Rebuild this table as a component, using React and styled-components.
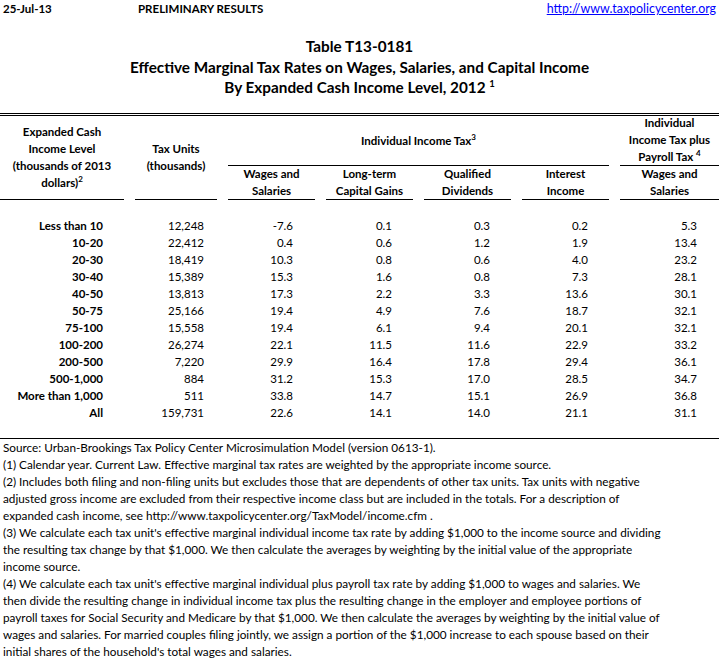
import React from 'react';
import styled, { createGlobalStyle } from 'styled-components';

const Global = createGlobalStyle`
  html, body { margin: 0; padding: 0; background: #fff; }
  body { font-family: Lato, "Liberation Sans", sans-serif; color: #000; }
`;

const COLS = '124px 82px 87px 87px 87px 87px 1fr';

const Page = styled.div`
  width: 719px;
  font-size: 11.5px;
`;

const TopBar = styled.div`
  display: grid;
  grid-template-columns: 135px 1fr auto;
  align-items: center;
  height: 17px;
  line-height: 17px;
  padding: 0 3px;
`;

const TopBold = styled.span`
  font-weight: 700;
`;

const Link = styled.a`
  color: #0000ff;
  font-size: 12.4px;
  text-decoration: underline;
`;

const Titles = styled.div`
  margin-top: 19px;
  text-align: center;
  font-weight: 700;
  font-size: 15.3px;
  line-height: 20.5px;
`;

const Sup = styled.sup`
  font-size: ${(p) => p.$size || 8}px;
  line-height: 0;
  vertical-align: super;
`;

const HeadGrid = styled.div`
  margin-top: 15px;
  border-top: 3px double #000;
  display: grid;
  grid-template-columns: ${COLS};
  grid-template-rows: 50px 34px;
  column-gap: 11px;
  font-weight: 700;
  line-height: 17px;
  text-align: center;
`;

const HeadCell = styled.div`
  grid-column: ${(p) => p.$col};
  grid-row: ${(p) => p.$row};
  border-bottom: 1px solid #000;
  display: flex;
  flex-direction: column;
  justify-content: ${(p) => p.$align || 'center'};
  align-items: center;
`;

const Body = styled.div`
  display: grid;
  grid-template-columns: ${COLS};
  grid-auto-rows: 17px;
  column-gap: 11px;
  padding: 17px 0;
  border-bottom: 1px solid #000;
  line-height: 17px;
`;

const Cell = styled.div`
  text-align: right;
  padding-right: ${(p) => p.$pad}px;
  font-weight: ${(p) => (p.$bold ? 700 : 400)};
  white-space: nowrap;
`;

const Notes = styled.div`
  padding: 0 3px;
  font-size: 11.75px;
  line-height: 17px;
  white-space: nowrap;
`;

const NoteLine = styled.div``;

const PADS = [21, 13, 22, 21, 21, 21, 22];

const rows = [
  ['Less than 10', '12,248', '-7.6', '0.1', '0.3', '0.2', '5.3'],
  ['10-20', '22,412', '0.4', '0.6', '1.2', '1.9', '13.4'],
  ['20-30', '18,419', '10.3', '0.8', '0.6', '4.0', '23.2'],
  ['30-40', '15,389', '15.3', '1.6', '0.8', '7.3', '28.1'],
  ['40-50', '13,813', '17.3', '2.2', '3.3', '13.6', '30.1'],
  ['50-75', '25,166', '19.4', '4.9', '7.6', '18.7', '32.1'],
  ['75-100', '15,558', '19.4', '6.1', '9.4', '20.1', '32.1'],
  ['100-200', '26,274', '22.1', '11.5', '11.6', '22.9', '33.2'],
  ['200-500', '7,220', '29.9', '16.4', '17.8', '29.4', '36.1'],
  ['500-1,000', '884', '31.2', '15.3', '17.0', '28.5', '34.7'],
  ['More than 1,000', '511', '33.8', '14.7', '15.1', '26.9', '36.8'],
  ['All', '159,731', '22.6', '14.1', '14.0', '21.1', '31.1'],
];

const notes = [
  'Source: Urban-Brookings Tax Policy Center Microsimulation Model (version 0613-1).',
  '(1) Calendar year. Current Law. Effective marginal tax rates are weighted by the appropriate income source.',
  '(2) Includes both filing and non-filing units but excludes those that are dependents of other tax units. Tax units with negative',
  'adjusted gross income are excluded from their respective income class but are included in the totals. For a description of',
  'expanded cash income, see http://www.taxpolicycenter.org/TaxModel/income.cfm .',
  "(3) We calculate each tax unit's effective marginal individual income tax rate by adding $1,000 to the income source and dividing",
  'the resulting tax change by that $1,000. We then calculate the averages by weighting by the initial value of the appropriate',
  'income source.',
  "(4) We calculate each tax unit's effective marginal individual plus payroll tax rate by adding $1,000 to wages and salaries. We",
  'then divide the resulting change in individual income tax plus the resulting change in the employer and employee portions of',
  'payroll taxes for Social Security and Medicare by that $1,000. We then calculate the averages by weighting by the initial value of',
  'wages and salaries. For married couples filing jointly, we assign a portion of the $1,000 increase to each spouse based on their',
  "initial shares of the household's total wages and salaries.",
];

export default function App() {
  return (
    <Page>
      <Global />
      <TopBar>
        <TopBold>25-Jul-13</TopBold>
        <TopBold>PRELIMINARY RESULTS</TopBold>
        <Link href="#">http://www.taxpolicycenter.org</Link>
      </TopBar>
      <Titles>
        <div>Table T13-0181</div>
        <div>Effective Marginal Tax Rates on Wages, Salaries, and Capital Income</div>
        <div>
          By Expanded Cash Income Level, 2012 <Sup $size={9.5}>1</Sup>
        </div>
      </Titles>
      <HeadGrid>
        <HeadCell $col="1" $row="1 / span 2">
          <span>Expanded Cash</span>
          <span>Income Level</span>
          <span>(thousands of 2013</span>
          <span>
            dollars)<Sup>2</Sup>
          </span>
        </HeadCell>
        <HeadCell $col="2" $row="1 / span 2">
          <span>Tax Units</span>
          <span>(thousands)</span>
        </HeadCell>
        <HeadCell $col="3 / span 4" $row="1">
          <span>
            Individual Income Tax<Sup>3</Sup>
          </span>
        </HeadCell>
        <HeadCell $col="7" $row="1" $align="flex-end">
          <span>Individual</span>
          <span>Income Tax plus</span>
          <span>
            Payroll Tax <Sup>4</Sup>
          </span>
        </HeadCell>
        <HeadCell $col="3" $row="2">
          <span>Wages and</span>
          <span>Salaries</span>
        </HeadCell>
        <HeadCell $col="4" $row="2">
          <span>Long-term</span>
          <span>Capital Gains</span>
        </HeadCell>
        <HeadCell $col="5" $row="2">
          <span>Qualified</span>
          <span>Dividends</span>
        </HeadCell>
        <HeadCell $col="6" $row="2">
          <span>Interest</span>
          <span>Income</span>
        </HeadCell>
        <HeadCell $col="7" $row="2">
          <span>Wages and</span>
          <span>Salaries</span>
        </HeadCell>
      </HeadGrid>
      <Body>
        {rows.map((r) =>
          r.map((v, i) => (
            <Cell key={r[0] + i} $pad={PADS[i]} $bold={i === 0}>
              {v}
            </Cell>
          ))
        )}
      </Body>
      <Notes>
        {notes.map((n) => (
          <NoteLine key={n}>{n}</NoteLine>
        ))}
      </Notes>
    </Page>
  );
}
